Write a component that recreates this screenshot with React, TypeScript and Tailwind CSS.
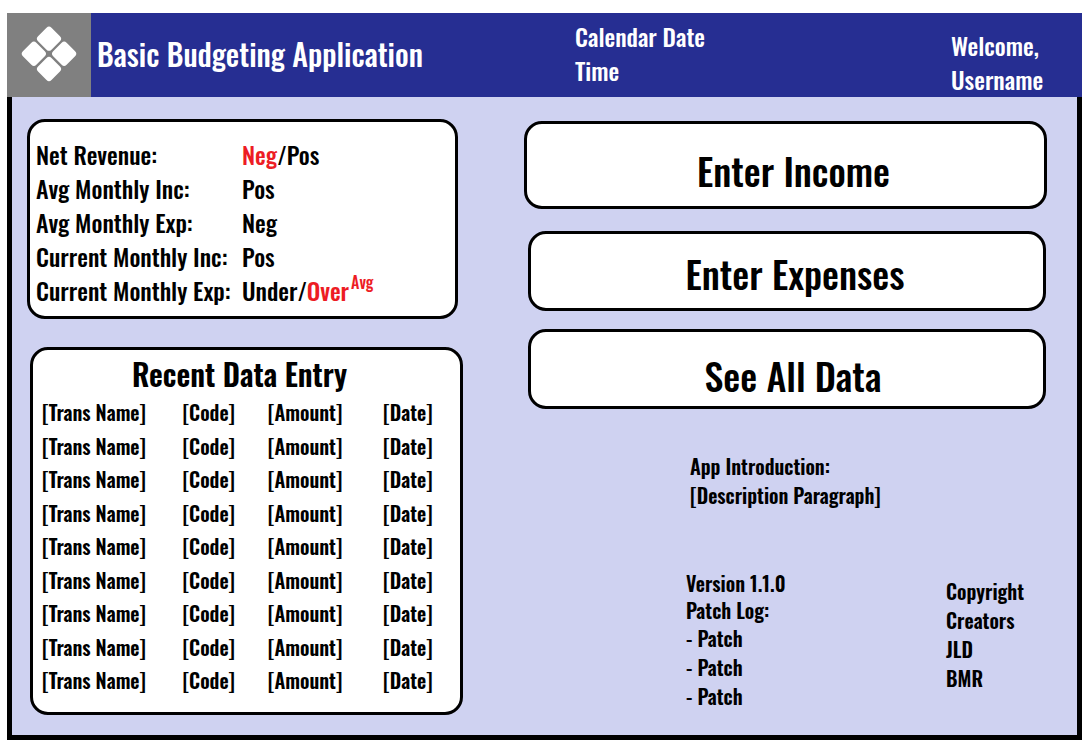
import React from "react";

type Entry = { id: number; name: string; code: string; amount: string; date: string };

const entries: Entry[] = Array.from({ length: 9 }, (_, i) => ({
  id: i,
  name: "[Trans Name]",
  code: "[Code]",
  amount: "[Amount]",
  date: "[Date]",
}));

function Logo() {
  return (
    <svg viewBox="0 0 84 84" className="block h-[84px] w-[84px] shrink-0 bg-[#808080]" role="img" aria-label="Logo">
      <g fill="#fff" transform="translate(42 40.8) rotate(45)">
        <rect x="-20.2" y="-20.2" width="19" height="19" rx="3.5" />
        <rect x="1.2" y="-20.2" width="19" height="19" rx="3.5" />
        <rect x="-20.2" y="1.2" width="19" height="19" rx="3.5" />
        <rect x="1.2" y="1.2" width="19" height="19" rx="3.5" />
      </g>
    </svg>
  );
}

function Header() {
  return (
    <header className="grid h-[84px] grid-cols-[84px_484fr_376fr_131fr] bg-[#262e92] text-2xl leading-[34px] text-white">
      <Logo />
      <h1 className="self-center pb-[2px] pl-[6px] text-[30px] whitespace-nowrap">Basic Budgeting Application</h1>
      <div className="pt-[6px]">
        <p>Calendar Date</p>
        <p>Time</p>
      </div>
      <div className="pt-[15px]">
        <p>Welcome,</p>
        <p>Username</p>
      </div>
    </header>
  );
}

function Stat({ label, children }: { label: string; children: React.ReactNode }) {
  return (
    <div className="grid grid-cols-[206px_1fr] whitespace-nowrap">
      <dt>{label}</dt>
      <dd>{children}</dd>
    </div>
  );
}

function Summary() {
  return (
    <dl className="mr-[5px] h-[200px] rounded-[18px] border-3 border-black bg-white pt-[15px] pl-[6px] text-2xl leading-[34px]">
      <Stat label="Net Revenue:">
        <span className="text-[#ed1c24]">Neg</span>/Pos
      </Stat>
      <Stat label="Avg Monthly Inc:">Pos</Stat>
      <Stat label="Avg Monthly Exp:">Neg</Stat>
      <Stat label="Current Monthly Inc:">Pos</Stat>
      <Stat label="Current Monthly Exp:">
        Under/<span className="text-[#ed1c24]">Over<sup className="-top-3 ml-[2px] text-base leading-none">Avg</sup></span>
      </Stat>
    </dl>
  );
}

function RecentEntries() {
  return (
    <section className="mt-7 ml-[3px] h-[368px] rounded-[18px] border-3 border-black bg-white font-semibold">
      <h2 className="pt-[3px] pr-[14px] text-center text-[30px] leading-[42px]">Recent Data Entry</h2>
      <table className="w-full table-fixed text-left text-xl leading-[30px] whitespace-nowrap" aria-label="Recent data entry">
        <colgroup>
          <col className="w-[35%]" />
          <col className="w-[20%]" />
          <col className="w-[27%]" />
          <col className="w-[18%]" />
        </colgroup>
        <tbody>
          {entries.map((e) => (
            <tr key={e.id} className="h-[34px] even:h-[33px]">
              <td className="p-0 pl-[9px]">{e.name}</td>
              <td className="p-0">{e.code}</td>
              <td className="p-0">{e.amount}</td>
              <td className="p-0">{e.date}</td>
            </tr>
          ))}
        </tbody>
      </table>
    </section>
  );
}

function Actions() {
  const base = "cursor-pointer rounded-[18px] border-3 border-black bg-white text-[38px] leading-[48px]";
  return (
    <nav className="flex flex-col" aria-label="Actions">
      <button type="button" className={`${base} h-[88px] pt-[10px] pl-4`}>Enter Income</button>
      <button type="button" className={`${base} mt-[22px] mr-px ml-1 h-[80px] pt-1 pl-4`}>Enter Expenses</button>
      <button type="button" className={`${base} mt-[18px] mr-px ml-1 h-[80px] pt-3 pl-3`}>See All Data</button>
    </nav>
  );
}

function Footer() {
  return (
    <div className="pl-[162px] text-xl leading-[29px] font-semibold whitespace-nowrap">
      <section className="mt-[43px] pl-1">
        <h2>App Introduction:</h2>
        <p>[Description Paragraph]</p>
      </section>
      <footer className="mt-[60px] grid grid-cols-[260fr_101fr]">
        <div>
          <p className="leading-[27px]">Version 1.1.0</p>
          <p className="leading-[27px]">Patch Log:</p>
          <ul>
            <li>- Patch</li>
            <li>- Patch</li>
            <li>- Patch</li>
          </ul>
        </div>
        <div className="pt-[7px]">
          <p>Copyright</p>
          <p>Creators</p>
          <p>JLD</p>
          <p>BMR</p>
        </div>
      </footer>
    </div>
  );
}

export default function App() {
  return (
    <div className="flex min-h-screen flex-col bg-white pt-[13px] pl-[7px] font-['Oswald','Roboto_Condensed','Roboto',sans-serif] font-medium text-black">
      <Header />
      <main className="grid flex-1 grid-cols-[436fr_523fr] gap-[61px] border-x-5 border-b-5 border-black bg-[#cfd2f1] pt-[22px] pr-[30px] pb-5 pl-[15px]">
        <div>
          <Summary />
          <RecentEntries />
        </div>
        <div className="pt-[2px]">
          <Actions />
          <Footer />
        </div>
      </main>
    </div>
  );
}
